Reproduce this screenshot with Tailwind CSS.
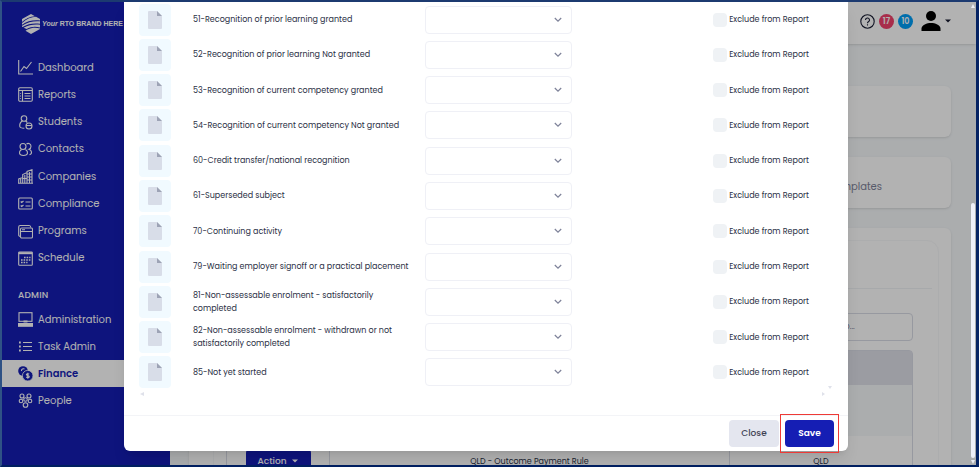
<!DOCTYPE html>
<html lang="en">
<head>
<meta charset="utf-8">
<meta name="viewport" content="width=device-width, initial-scale=1">
<title>Finance - Outcome settings</title>
<script src="https://cdn.jsdelivr.net/npm/@tailwindcss/browser@4"></script>
</head>
<body class="font-['Poppins','Inter',sans-serif] text-[8px] leading-[13px] text-[#2a2f45]">
<div class="relative flex h-screen overflow-hidden border-y-2 border-r-3 border-l-2 border-t-[#1c3a70] border-r-[#052363] border-b-[#001f60] border-l-[#2f5285] bg-[#f5f8fa]">

  <!-- Sidebar -->
  <aside class="w-[168px] shrink-0 bg-[#151eb4] text-[10px] leading-4 text-white">
    <a href="#" class="flex h-[52px] items-center gap-0.5 pl-5 pb-3 pt-1 whitespace-nowrap">
      <svg class="h-5 w-[18px] shrink-0" viewBox="0 0 18 20" fill="currentColor" aria-hidden="true">
        <path d="M0 5 9 0l4 2.200C8 2.500 3.500 4.500 0 8z"/>
        <path d="M0 9C4.500 4.800 9.500 3 14 2.800l4 2.300v1.400C11.500 5.700 5 7 0 10.700z"/>
        <path d="M0 11.700C5.500 8 12 6.700 18 7.300v2.500C12 8.800 6 9.700.6 13L0 12.700z"/>
        <path d="M1.600 13.700C7 10.900 12.500 10.100 18 10.800v2.600c-4.500-1.200-9-1-13.400 1.500z"/>
        <path d="M5.600 15.500c4-1.900 8.400-2 12.400-1v.5L9 20l-5.500-3.200z"/>
      </svg>
      <span class="font-['Liberation_Sans',Arial,sans-serif] text-[7px] font-bold"><i>Your</i> RTO BRAND HERE</span>
    </a>
    <nav aria-label="Main" id="nav" class="grid h-[218px] auto-rows-fr"></nav>
    <h2 class="pt-[15px] pb-[3px] pl-4 text-[9px] font-medium tracking-wide">ADMIN</h2>
    <nav aria-label="Admin" id="admin" class="grid h-[108px] auto-rows-fr"></nav>
  </aside>

  <!-- Page -->
  <div class="flex min-w-0 flex-1 flex-col">
    <header class="flex h-[42px] shrink-0 items-center justify-end gap-1 bg-white pr-[25px] pb-1 shadow-sm">
      <svg class="mr-2 size-3" viewBox="0 0 12 12" fill="none" stroke="#181c32" stroke-width="1.300" aria-hidden="true"><path d="M1 9h10.500M3 9V5a3 3 0 0 1 6 0v4"/></svg>
      <button aria-label="Help"><svg class="size-[15px]" viewBox="0 0 15 15" fill="none" stroke="#181c32" stroke-width="1.100"><circle cx="7.500" cy="7.500" r="6.700"/><path d="M5.500 6a2 2 0 1 1 2.900 1.800c-.6.300-.9.700-.9 1.400"/><path d="M7.500 10.300v1.200"/></svg></button>
      <span class="flex size-[15px] items-center justify-center rounded-full bg-[#f1416c] text-[8px] font-semibold text-white">17</span>
      <span class="flex size-[15px] items-center justify-center rounded-full bg-[#009ef7] text-[8px] font-semibold text-white">10</span>
      <button aria-label="Account" class="ml-1 flex items-center gap-1">
        <svg class="h-5 w-5" viewBox="0 0 20 20" fill="#000"><circle cx="10" cy="5" r="5"/><path d="M.5 20v-2.500C.5 14 6 12 10 12s9.500 2 9.500 5.500V20z"/></svg>
        <svg class="h-1 w-1.5" viewBox="0 0 6 4" fill="#181c32"><path d="M0 .5h6L3 3.500z"/></svg>
      </button>
    </header>
    <main class="flex flex-1 flex-col gap-5 pt-[42px] pr-[25px] pl-[19px]">
      <section class="h-[51px] shrink-0 rounded-md bg-white shadow-sm"></section>
      <section class="flex h-[51px] shrink-0 items-center justify-end rounded-md bg-white pt-2 pr-[69px] text-[10px] text-[#7e8299] shadow-sm">Templates</section>
      <section class="flex-1 rounded-md bg-white pt-3 pr-3 pl-6 shadow-sm">
        <div class="rounded-xl border border-[#f7f8fa] pl-3">
          <div class="mr-1.5 h-12 border-b border-[#eff2f5]"></div>
          <div class="flex justify-end pt-6 pr-[25px]">
            <input aria-label="Search" placeholder="Search by name, code or state info..." class="h-7 w-[228px] rounded border border-[#d8dbe5] pl-6 placeholder:text-[#7e8299]">
          </div>
          <div class="mt-[9px] mr-[25px]">
            <table class="w-full table-fixed border-separate border-spacing-0 rounded-t border border-[#d8dbe5] text-center">
              <colgroup><col class="w-[103px]"><col class="w-[400px]"><col></colgroup>
              <thead><tr class="h-[34px] bg-[#dfe0e9]"><th></th><th></th><th></th></tr></thead>
              <tbody>
                <tr class="h-[51px] bg-[#f5f8fa]"><td></td><td></td><td></td></tr>
                <tr class="h-[50px]">
                  <td class="border-r border-[#d8dbe5]"><button class="inline-flex h-6 w-[65px] items-center justify-center gap-1.5 rounded bg-[#151eb4] text-[9px] font-medium text-white">Action <svg class="h-1 w-1.5" viewBox="0 0 6 4" fill="currentColor"><path d="M0 .5h6L3 3.500z"/></svg></button></td>
                  <td class="border-r border-[#d8dbe5]">QLD - Outcome Payment Rule</td>
                  <td>QLD</td>
                </tr>
              </tbody>
            </table>
          </div>
        </div>
      </section>
    </main>
  </div>

  <!-- Dialog -->
  <div class="absolute inset-0 flex items-start bg-black/30 pl-[122px]">
    <form role="dialog" aria-label="Outcome settings" class="mr-[128px] flex-1 rounded-b-md bg-white shadow-lg">
      <div id="rows" class="grid h-[388px] auto-rows-fr px-[15px]"></div>
      <div class="flex h-[25px] items-start justify-between px-4 pt-0.5" aria-hidden="true">
        <svg class="h-1 w-1" viewBox="0 0 4 4" fill="#dfe1ea"><path d="M4 0v4L0 2z"/></svg>
        <svg class="-mt-1.5 size-3" viewBox="0 0 12 12" fill="#dfe1ea"><path d="M8 0h4l-2 3zM2 6v4l3-2z"/></svg>
      </div>
      <footer class="flex items-start justify-end gap-1.5 border-t border-[#f3f4f7] pt-1 pr-3.5 pb-1 text-[9px]">
        <button type="button" class="h-[27px] w-[50px] rounded bg-[#e4e6ef] font-medium text-[#3f4254]">Close</button>
        <span class="relative"><button type="button" class="h-[27px] w-[49px] rounded bg-[#151eb4] font-semibold text-white">Save</button>
          <span class="pointer-events-none absolute -inset-x-[5px] -inset-y-1.5 border border-[#ee3a36]"></span></span>
      </footer>
    </form>
  </div>
  <div class="absolute top-0 right-0 flex h-full w-1.5 flex-col items-center" aria-hidden="true">
    <svg class="mt-0.5 h-1 w-1" viewBox="0 0 4 4" fill="#eceef4"><path d="M0 4h4L2 0z"/></svg>
    <div class="mt-auto mb-0.5 h-[55%] w-1 rounded-full bg-[#eef0f8]"></div>
    <svg class="mb-px h-1 w-1" viewBox="0 0 4 4" fill="#eceef4"><path d="M0 0h4L2 4z"/></svg>
  </div>
</div>

<script>
const icons = {
  Dashboard: '<path d="M.7 0v14H15M2.500 11.500 6 6.500l2.500 2L13.500 2"/>',
  Reports: '<rect x=".7" y=".7" width="13.600" height="13.600" rx="1.200"/><path d="M.7 3.500h13.600M4.500 3.500v10.800M2.500 6v.8M2.500 8.600v.8M2.500 11.200v.8M6.500 6.500h6M6.500 9h6M6.500 11.500h6"/>',
  Students: '<circle cx="6" cy="3.500" r="2.800"/><path d="M4.200 6C2 7.500 1.500 9.500 1.800 11.500c.2 1 1.700 1.700 4.500 1.700M7.800 6l1.500 1.500"/><circle cx="11" cy="11" r="3"/><path d="M8 10.500h6"/>',
  Contacts: '<circle cx="5" cy="4.500" r="3"/><path d="M3.500 7.500C.5 9.500.5 13.500 5.500 13.500s5-4 2-6M8.500 2c2-1.500 4.500 0 4.500 2.300C13 6 12 7 11 7.300c3 1 3.500 4.700.5 5.400"/>',
  Companies: '<path d="M.7 14V10l4-1.500V14M4.700 14V5.500L9 3.500V14M9 14V2.500L14 .7V14M0 14.300h15M2.700 10v4M6.800 6v8M11.500 3v11M9 5h5M9 8h5M4.700 9.500H9M9 11h5"/>',
  Compliance: '<rect x=".7" y="2" width="13.600" height="11" rx="1"/><path d="m2.700 5.500 1 1L5.500 5M2.700 9.500l1 1L5.500 9M7.500 6h5M7.500 10h5"/>',
  Programs: '<rect x="2.500" y="4" width="12" height="10" rx="1.200"/><path d="M2.500 12.500C1 12.500.7 11.500.7 11V3c0-1 .7-1.500 1.500-1.500h9c1 0 1.500.6 1.500 2M2.500 7.500h12M4 5.700h3"/>',
  Schedule: '<rect x=".7" y="1" width="13.600" height="13.300" rx=".8"/><path d="M.7 2.200h13.600" stroke-width="2"/><path d="M6 6.500h6.500M3 9h9.500M3 11.500h6.500" stroke-width="1.600" stroke-dasharray="1.600 1"/>',
  Administration: '<rect x="1" y=".7" width="13" height="8.600"/><path d="M0 11.500h15v2.800H0z" fill="currentColor"/><path d="M5.500 9.500h4" stroke-width="2"/>',
  'Task Admin': '<path d="M1 3.500h1.800M1 7.500h1.800M1 11.500h1.800" stroke-width="1.800"/><path d="M5 3.500h9M5 7.500h9M5 11.500h9"/>',
  Finance: '<circle cx="5" cy="5" r="4.800" fill="currentColor" stroke="none"/><circle cx="9.700" cy="9.700" r="5.300" fill="currentColor" stroke="#fff" stroke-width=".8"/><path d="M6.500 3C4 2.200 3 4 3.700 5M11.200 8.200c-.8-.8-3-.6-2.800.5.200 1.200 2.900.7 2.900 2 0 1.200-2.300 1.200-3 .2M9.800 6.800v6" stroke="#fff"/>',
  People: '<circle cx="4" cy="3" r="2"/><circle cx="11" cy="3" r="2"/><circle cx="7.500" cy="6.500" r="1.800"/><circle cx="3" cy="8" r="1.800"/><circle cx="12" cy="8" r="1.800"/><circle cx="7.500" cy="12" r="2.300"/>'
};
const item = name => `<a href="#" class="flex items-center gap-[5px] pl-4 ${name === 'Finance' ? 'bg-white font-semibold text-[#151eb4]' : ''}"><svg class="size-[15px]" viewBox="0 0 15 15" fill="none" stroke="currentColor" stroke-width="1.100" aria-hidden="true">${icons[name]}</svg>${name}</a>`;
document.getElementById('nav').innerHTML = ['Dashboard','Reports','Students','Contacts','Companies','Compliance','Programs','Schedule'].map(item).join('');
document.getElementById('admin').innerHTML = ['Administration','Task Admin','Finance','People'].map(item).join('');

const outcomes = [
  '51-Recognition of prior learning granted',
  '52-Recognition of prior learning Not granted',
  '53-Recognition of current competency granted',
  '54-Recognition of current competency Not granted',
  '60-Credit transfer/national recognition',
  '61-Superseded subject',
  '70-Continuing activity',
  '79-Waiting employer signoff or a practical placement',
  '81-Non-assessable enrolment - satisfactorily\ncompleted',
  '82-Non-assessable enrolment - withdrawn or not\nsatisfactorily completed',
  '85-Not yet started'
];
document.getElementById('rows').innerHTML = outcomes.map((text, i) => `
<div class="flex items-center">
  <span class="flex size-8 items-center justify-center rounded bg-[#f1faff]">
    <svg class="h-[18px] w-3.5" viewBox="0 0 14 18" aria-hidden="true"><path d="M1 0h8l5 5v12a1 1 0 0 1-1 1H1a1 1 0 0 1-1-1V1a1 1 0 0 1 1-1z" fill="#d8dde8"/><path d="M9 0l5 5H9z" fill="#9da3b5"/></svg>
  </span>
  <label for="outcome${i}" class="ml-[22px] w-[232px] whitespace-pre-line">${text}</label>
  <span class="relative w-[147px]">
    <select id="outcome${i}" class="block h-7 w-full appearance-none rounded border border-[#eff0f6] bg-white"><option></option></select>
    <svg class="pointer-events-none absolute top-[11px] right-2.5 h-1.5 w-2" viewBox="0 0 8 6" fill="none" stroke="#7e8299" stroke-width="1.200" aria-hidden="true"><path d="M.8 1 4 4.200 7.200 1"/></svg>
  </span>
  <label class="ml-auto flex items-center gap-0.5 pr-6"><input type="checkbox" class="size-3.5 appearance-none rounded bg-[#eff2f5]">Exclude from Report</label>
</div>`).join('');
</script>
</body>
</html>
